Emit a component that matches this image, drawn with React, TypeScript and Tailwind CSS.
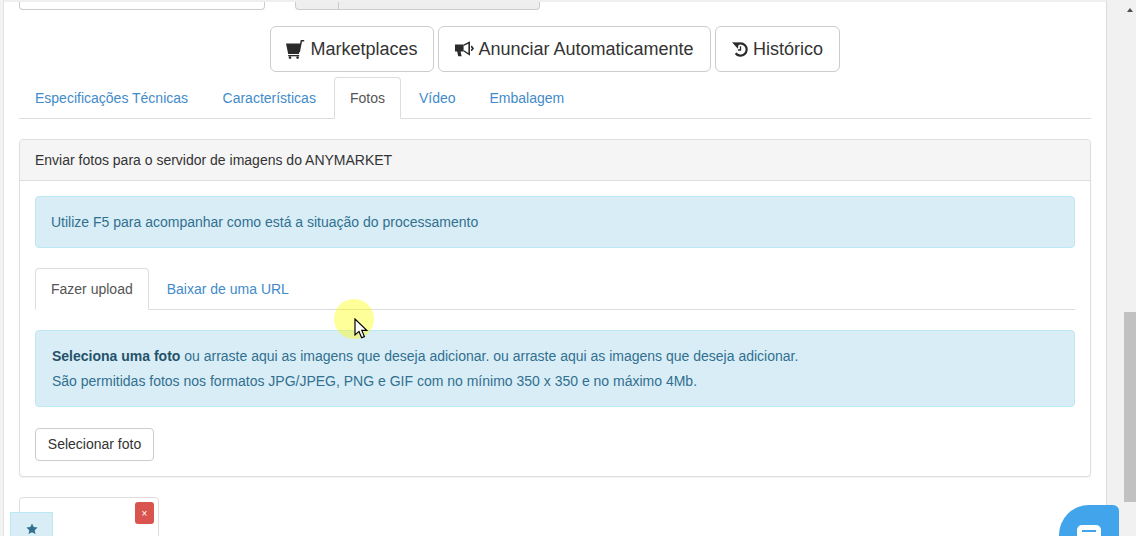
const font = { fontFamily: '"Liberation Sans", Arial, sans-serif' };

function CartIcon() {
  return (
    <svg width="19" height="19" viewBox="0 0 19 19" className="shrink-0" fill="#2b2b2b">
      <path d="M0 3.6h14.4L13 14H2.2L0 3.6z" />
      <path d="M13.2 12 15.4.7h2.8" fill="none" stroke="#2b2b2b" strokeWidth="1.5" />
      <rect x="2.2" y="15" width="11" height="1.3" />
      <circle cx="4" cy="17.6" r="1.3" />
      <circle cx="11.6" cy="17.6" r="1.3" />
    </svg>
  );
}

function BullhornIcon() {
  return (
    <svg width="18" height="16" viewBox="0 0 18 16" className="shrink-0 overflow-visible" fill="#2b2b2b">
      <path d="M0 3.4h8.6v7.2H5.6l1 4.6H3.2l-1-4.6H0V3.4z" />
      <path d="M8.6 3.4 15 .2v14.6L8.6 10.6V9l4.8 3V2.8L8.6 5V3.4z" />
      <path d="M16 4.8h1l2 2.6-2 2.6h-1V8.6l1-1.2-1-1.2V4.8z" />
    </svg>
  );
}

function HistoryIcon() {
  return (
    <svg width="16" height="15" viewBox="0 0 16 15" className="shrink-0 overflow-visible" fill="none" stroke="#2b2b2b">
      <path d="M4 3.2A6.2 6.2 0 1 1 3.6 11.3" strokeWidth="2.2" />
      <path d="M0 .2 7 .6 5.8 6.8 0 .2z" fill="#2b2b2b" stroke="none" />
      <path d="M8.5 4.2V8H6" strokeWidth="1.3" />
    </svg>
  );
}

function BigButton({ icon, label, className }: { icon: React.ReactNode; label: string; className: string }) {
  return (
    <button
      className={`flex h-[46px] items-center justify-center gap-[5px] rounded-[6px] border border-[#cccccc] bg-white text-[18px] text-[#333333] ${className}`}
    >
      {icon}
      {label}
    </button>
  );
}

function TabLink({ label, active }: { label: string; active?: boolean }) {
  if (active) {
    return (
      <span className="-mb-px mr-[2px] flex h-[42px] items-center rounded-t-[4px] border border-[#dddddd] border-b-white bg-white px-[15px] text-[#555555]">
        {label}
      </span>
    );
  }
  return <span className="-mb-px mr-[2px] flex h-[42px] items-center px-4 text-[#428bca]">{label}</span>;
}

export default function App() {
  return (
    <div className="relative flex h-[536px] w-[1136px] overflow-hidden bg-white text-[14px] text-[#333333]" style={font}>
      {/* faixa esquerda da pagina */}
      <div className="w-[4px] shrink-0 border-r border-[#e3e3e3] bg-[#f3f3f3]" />

      <main className="w-[1103px] shrink-0 border-t-2 border-[#efefef] border-r border-r-[#dddddd] pl-[15px] pr-[15px]">
        <div className="flex h-[8px]">
          <div className="w-[246px] rounded-b-[4px] border border-t-0 border-[#cccccc] bg-white" />
          <div className="ml-[30px] flex w-[245px] rounded-b-[4px] border border-t-0 border-[#cccccc] bg-[#eeeeee]">
            <div className="w-[43px] border-r border-[#cccccc]" />
          </div>
        </div>

        <div className="mt-[16px] flex justify-center gap-1">
          <BigButton className="w-[164px]" icon={<CartIcon />} label="Marketplaces" />
          <BigButton className="w-[273px]" icon={<BullhornIcon />} label="Anunciar Automaticamente" />
          <BigButton className="w-[125px]" icon={<HistoryIcon />} label="Histórico" />
        </div>

        <div className="mt-[5px] flex h-[42px] border-b border-[#dddddd]">
          <TabLink label="Especificações Técnicas" />
          <div className="ml-[0.5px]" />
          <TabLink label="Características" />
          <TabLink label="Fotos" active />
          <TabLink label="Vídeo" />
          <TabLink label="Embalagem" />
        </div>

        <section className="mt-5 h-[338px] rounded-[4px] border border-[#dddddd] bg-white shadow-[0_1px_1px_rgba(0,0,0,0.05)]">
          <div className="flex h-[41px] items-center rounded-t-[3px] border-b border-[#dddddd] bg-[#f5f5f5] px-[15px]">
            Enviar fotos para o servidor de imagens do ANYMARKET
          </div>
          <div className="px-[15px] pt-[15px]">
            <div className="flex h-[52px] items-center rounded-[4px] border border-[#bce8f1] bg-[#d9edf7] px-[15px] text-[#31708f]">
              Utilize F5 para acompanhar como está a situação do processamento
            </div>

            <div className="mt-5 flex h-[42px] border-b border-[#dddddd]">
              <TabLink label="Fazer upload" active />
              <TabLink label="Baixar de uma URL" />
            </div>

            <div className="mt-5 h-[77px] rounded-[4px] border border-[#bce8f1] bg-[#d9edf7] px-4 pt-[13px] leading-[25px] text-[#31708f]">
              <p>
                <strong className="text-[#245269]">Seleciona uma foto</strong> ou arraste aqui as imagens que deseja
                adicionar. ou arraste aqui as imagens que deseja adicionar.
              </p>
              <p>São permitidas fotos nos formatos JPG/JPEG, PNG e GIF com no mínimo 350 x 350 e no máximo 4Mb.</p>
            </div>

            <button className="mt-[21px] h-[33px] w-[119px] rounded-[4px] border border-[#cccccc] bg-white text-[#333333]">
              Selecionar foto
            </button>
          </div>
        </section>

        <div className="mt-5 flex h-[60px] w-[140px] justify-end rounded-[4px] border border-[#dddddd] pr-1 pt-1">
          <span className="flex h-[22px] w-[19px] items-center justify-center rounded-[3px] bg-[#d9534f] text-[10px] text-white">
            ×
          </span>
        </div>
      </main>

      {/* barra de rolagem */}
      <aside className="flex w-[29px] shrink-0 justify-end bg-[#f1f1f1]">
        <div className="w-[12px]">
          <div className="mx-auto mt-[8px] h-0 w-0 border-x-[3px] border-b-[4px] border-x-transparent border-b-[#505050]" />
          <div className="mt-[300px] h-[190px] bg-[#c1c1c1]" />
        </div>
      </aside>

      {/* elementos flutuantes */}
      <div className="absolute left-[10px] top-[512px] flex h-[30px] w-[43px] justify-center border border-[#bce8f1] bg-[#d9edf7] pt-[10px]">
        <svg width="12" height="12" viewBox="0 0 12 12" fill="#31708f">
          <path d="M6 .4 7.7 4l3.9.5-2.9 2.7.8 3.9L6 9.2l-3.5 1.9.8-3.9L.4 4.5 4.3 4 6 .4z" />
        </svg>
      </div>

      <div className="absolute left-[1059px] top-[505px] flex h-[60px] w-[60px] justify-center rounded-tl-[30px] rounded-tr-[6px] bg-[#42a5ec] pt-[20px]">
        <div className="h-[20px] w-[24px] rounded-[5px] bg-white pt-[5px]">
          <div className="mx-auto h-[2px] w-[14px] bg-[#42a5ec]" />
        </div>
      </div>

      <div className="absolute left-[334px] top-[299px] h-[40px] w-[40px] rounded-full bg-[#ffff00]/40" />
      <svg className="absolute left-[354px] top-[318px]" width="14" height="22" viewBox="0 0 14 22">
        <path d="M1 1v16l4-3.6 2.6 6.4 2.8-1.2-2.6-6.2h5L1 1z" fill="#ffffff" stroke="#000000" strokeWidth="1.2" />
      </svg>
    </div>
  );
}
